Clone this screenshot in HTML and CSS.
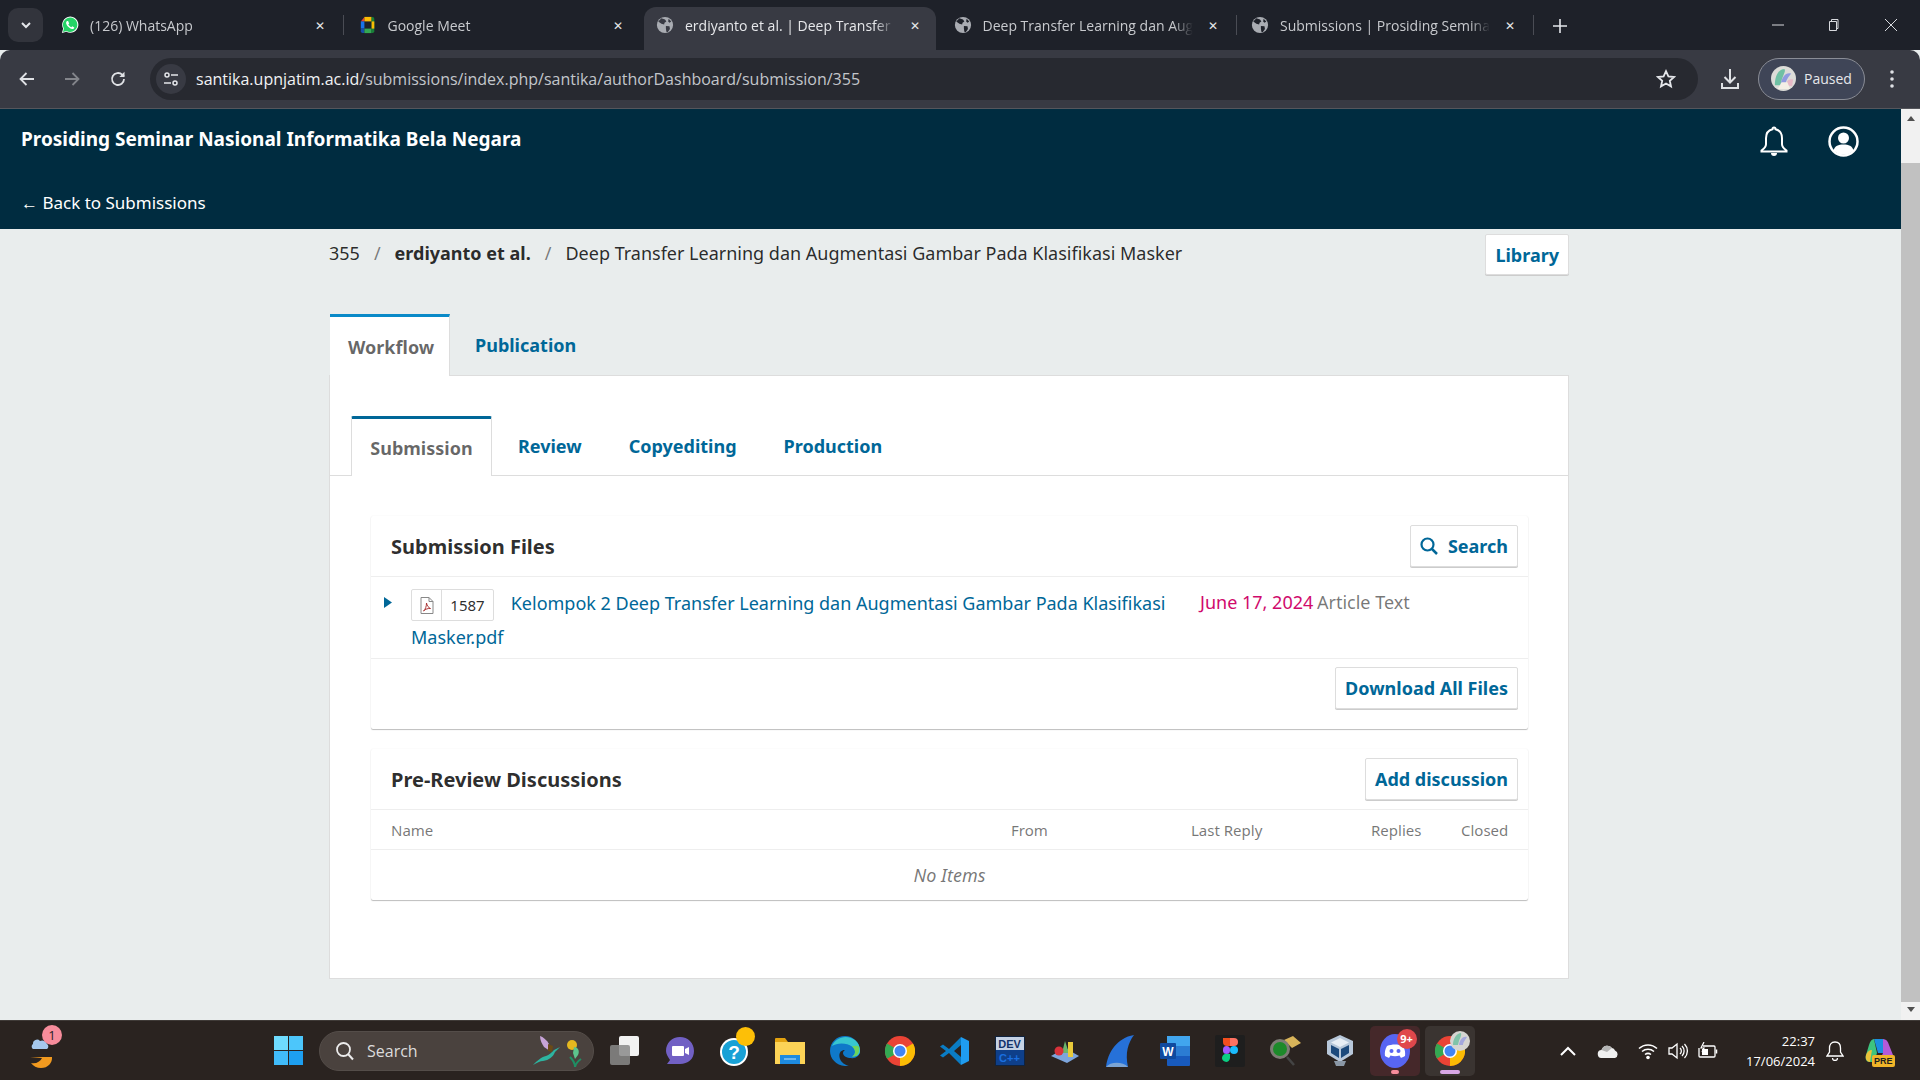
FILE: index.html
```html
<!DOCTYPE html>
<html lang="en">
  <head>
    <meta charset="UTF-8" />
    <title>erdiyanto et al. | Deep Transfer Learning</title>
    <link rel="stylesheet" href="styles.css">
  </head>
  <body>
    <div class="screen">
      <!-- browser tabs -->
      <div class="tabstrip">
        <div class="tab-search"><svg width="12" height="12" viewBox="0 0 12 12"><path d="M2 4l4 4 4-4" fill="none" stroke="#e4e6ea" stroke-width="2"/></svg></div>
        <div class="tab">
          <svg class="tab-icon" viewBox="0 0 20 20"><path d="M1 19l1.4-5A9 9 0 1 1 6 17.6z" fill="#fff"/><path d="M2.2 17.8l1.1-3.9A8 8 0 1 1 6.2 16.7z" fill="#25d366"/><path d="M7 5.5c-.8.3-1.5 1.300-1.300 2.600.3 2.400 3.700 6 6.700 6.400 1.300 0 2.200-.8 2.400-1.800l-2.300-1.300-1 1.100c-1.500-.5-2.800-1.800-3.400-3.300l1-1-1.200-2.700z" fill="#fff"/></svg>
          <span class="tab-title">(126) WhatsApp</span>
          <span class="tab-close">✕</span>
        </div>
        <div class="tab-sep"><i></i></div>
        <div class="tab">
          <svg class="tab-icon" viewBox="0 0 20 20"><path d="M2 6l4-5v5z" fill="#ea4335"/><path d="M6 1h8v5H6z" fill="#fbbc04"/><path d="M2 6h4v8H2z" fill="#1a73e8"/><path d="M2 14h4v5H4a2 2 0 0 1-2-2z" fill="#174ea6"/><path d="M6 14h8v5H6z" fill="#34a853"/><path d="M14 1h1a2 2 0 0 1 2 2v14a2 2 0 0 1-2 2h-1z" fill="#188038"/><path d="M14 6h3v8h-3z" fill="#fbbc04"/></svg>
          <span class="tab-title">Google Meet</span>
          <span class="tab-close">✕</span>
        </div>
        <div class="tab-sep"></div>
        <div class="tab active">
          <svg class="tab-icon" viewBox="0 0 20 20"><circle cx="10" cy="10" r="9" fill="#a9acb2"/><path d="M6 2.500l4 1.500 1.500 2-2 1.500-.5 2-3-1-3.500-2.500zM11 11l4 .5.500 3-2.500 3.500-1.500-.5-.5-3.500zM14 3l3 3-2 1.500-1.500-1.500z" fill="#383a43"/></svg>
          <span class="tab-title">erdiyanto et al. | Deep Transfer Learning dan</span>
          <span class="tab-close">✕</span>
        </div>
        <div class="tab-sep"></div>
        <div class="tab">
          <svg class="tab-icon" viewBox="0 0 20 20"><circle cx="10" cy="10" r="9" fill="#a9acb2"/><path d="M6 2.500l4 1.500 1.500 2-2 1.500-.5 2-3-1-3.500-2.500zM11 11l4 .5.500 3-2.500 3.500-1.500-.5-.5-3.500zM14 3l3 3-2 1.500-1.500-1.500z" fill="#1e2129"/></svg>
          <span class="tab-title">Deep Transfer Learning dan Augmentasi</span>
          <span class="tab-close">✕</span>
        </div>
        <div class="tab-sep"><i></i></div>
        <div class="tab">
          <svg class="tab-icon" viewBox="0 0 20 20"><circle cx="10" cy="10" r="9" fill="#a9acb2"/><path d="M6 2.500l4 1.500 1.500 2-2 1.500-.5 2-3-1-3.500-2.500zM11 11l4 .5.500 3-2.500 3.500-1.500-.5-.5-3.500zM14 3l3 3-2 1.500-1.500-1.500z" fill="#1e2129"/></svg>
          <span class="tab-title">Submissions | Prosiding Seminar Nasional</span>
          <span class="tab-close">✕</span>
        </div>
        <div class="tab-sep"><i></i></div>
        <div class="tab-new"><svg width="14" height="14" viewBox="0 0 14 14"><path d="M7 0v14M0 7h14" stroke="#e4e6ea" stroke-width="1.600"/></svg></div>
        <div class="window-controls">
          <svg class="win-min" width="12" height="12" viewBox="0 0 12 12"><path d="M0 6h12" stroke="#d8dade"/></svg>
          <svg class="win-max" width="14" height="14" viewBox="0 0 14 14"><path d="M3.500 3.500h7v9h-7zM5.500 3.500V1.500h6.500v9h-1.500" fill="none" stroke="#d8dade"/></svg>
          <svg class="win-close" width="14" height="14" viewBox="0 0 14 14"><path d="M1 1l12 12M13 1L1 13" stroke="#d8dade"/></svg>
        </div>
      </div>

      <!-- browser toolbar -->
      <div class="toolbar">
        <button class="nav-btn"><svg width="18" height="18" viewBox="0 0 18 18"><path d="M16 9H3M8.500 3L2.500 9l6 6" fill="none" stroke="#dfe1e5" stroke-width="1.800"/></svg></button>
        <button class="nav-btn"><svg width="18" height="18" viewBox="0 0 18 18"><path d="M2 9h13M9.500 3l6 6-6 6" fill="none" stroke="#83858b" stroke-width="1.800"/></svg></button>
        <button class="nav-btn"><svg width="18" height="18" viewBox="0 0 18 18"><path d="M15 9a6 6 0 1 1-1.800-4.300L15 6.500" fill="none" stroke="#dfe1e5" stroke-width="1.800"/><path d="M15.500 1.800v5.200h-5.200z" fill="#dfe1e5"/></svg></button>
        <div class="address-bar">
          <span class="site-info"><svg width="18" height="18" viewBox="0 0 18 18"><circle cx="5" cy="5" r="2" fill="none" stroke="#e4e6ea" stroke-width="1.500"/><path d="M9 5h7M2 13h7" stroke="#e4e6ea" stroke-width="1.500"/><circle cx="13" cy="13" r="2" fill="none" stroke="#e4e6ea" stroke-width="1.500"/></svg></span>
          <span class="url">santika.upnjatim.ac.id<span class="url-path">/submissions/index.php/santika/authorDashboard/submission/355</span></span>
          <svg class="star" width="20" height="20" viewBox="0 0 20 20"><path d="M10 2.200l2.400 5.200 5.600.6-4.200 3.800 1.200 5.600-5-2.900-5 2.900 1.200-5.600L2 8l5.600-.6z" fill="none" stroke="#e4e6ea" stroke-width="1.800"/></svg>
        </div>
        <svg class="download" width="20" height="22" viewBox="0 0 20 22"><path d="M10 1v13M4.500 9l5.500 5.500L15.500 9M2 15v5h16v-5" fill="none" stroke="#dfe1e5" stroke-width="2"/></svg>
        <div class="profile">
          <svg class="avatar" viewBox="0 0 26 26"><circle cx="13" cy="13" r="13" fill="#dcdcd8"/><path d="M4 20C4 10 8 3 14 3c2 3-3 8-4 17z" fill="#6fc0a4"/><path d="M10 20c1-9 6-14 11-12-2 2-6 7-6 12z" fill="#8f9be0"/><path d="M16 20c0-5 3-7 7-6l-1 7z" fill="#e6b9c7"/><path d="M7 24l4-7h6l3 7z" fill="#f4efe6"/></svg>
          <span>Paused</span>
        </div>
        <svg class="kebab" width="6" height="20" viewBox="0 0 6 20"><circle cx="3" cy="3" r="1.800" fill="#dfe1e5"/><circle cx="3" cy="10" r="1.800" fill="#dfe1e5"/><circle cx="3" cy="17" r="1.800" fill="#dfe1e5"/></svg>
      </div>

      <div class="viewport">
        <div class="page">
          <header class="app-header">
            <div class="header-top">
              <a class="journal-name">Prosiding Seminar Nasional Informatika Bela Negara</a>
              <div class="header-icons">
                <svg width="30" height="31" viewBox="0 0 30 31"><path d="M15 1.500c1 0 1.500.7 1.500 1.700 4.500 1 6.500 4.500 6.500 9v6c0 2.500 2 4.500 4.500 6.300v1H2.500v-1C5 22.700 7 20.700 7 18.200v-6c0-4.500 2-8 6.500-9 0-1 .5-1.700 1.500-1.700z" fill="none" stroke="#fff" stroke-width="2"/><path d="M12 27a3 3 0 0 0 6 0z" fill="#fff"/></svg>
                <svg width="31" height="31" viewBox="0 0 31 31"><circle cx="15.500" cy="15.500" r="14" fill="none" stroke="#fff" stroke-width="2.500"/><circle cx="15.500" cy="12" r="5.500" fill="#fff"/><path d="M5.500 24.500c1-4.500 5-6 10-6s9 1.500 10 6a14 14 0 0 1-20 0z" fill="#fff"/></svg>
              </div>
            </div>
            <a class="back-link">← Back to Submissions</a>
          </header>

          <main class="content">
            <div class="breadcrumb">
              <span>355</span>
              <span class="slash">/</span>
              <strong>erdiyanto et al.</strong>
              <span class="slash">/</span>
              <span>Deep Transfer Learning dan Augmentasi Gambar Pada Klasifikasi Masker</span>
              <a class="btn library-btn">Library</a>
            </div>

            <div class="main-tabs">
              <a class="main-tab current">Workflow</a>
              <a class="main-tab">Publication</a>
            </div>

            <section class="panel">
              <div class="sub-tabs">
                <a class="sub-tab current">Submission</a>
                <a class="sub-tab review">Review</a>
                <a class="sub-tab">Copyediting</a>
                <a class="sub-tab">Production</a>
              </div>

              <div class="panel-body">
                <div class="card">
                  <div class="card-head">
                    <h2>Submission Files</h2>
                    <a class="btn"><svg class="search-glyph" width="18" height="18" viewBox="0 0 18 18"><circle cx="7.500" cy="7.500" r="6" fill="none" stroke="#006798" stroke-width="2.200"/><path d="M12 12l5 5" stroke="#006798" stroke-width="2.500"/></svg>Search</a>
                  </div>
                  <div class="file-row">
                    <svg class="row-arrow" width="8" height="11" viewBox="0 0 8 11"><path d="M0 0l8 5.500L0 11z" fill="#006798"/></svg>
                    <div class="file-name">
                      <span class="file-badge">
                        <span class="file-type"><svg width="14" height="17" viewBox="0 0 14 17"><path d="M1 .5h8l4 4v12H1z" fill="none" stroke="#888"/><path d="M9 .5v4h4" fill="none" stroke="#888"/><path d="M3.500 14c2-1.500 3-5 3-8 .5 3 2 4.500 4 5.500-2.500-.2-5 .5-7 2.500z" fill="none" stroke="#a33"/></svg></span>
                        <span class="file-id">1587</span>
                      </span>
                      <a>Kelompok 2 Deep Transfer Learning dan Augmentasi Gambar Pada Klasifikasi Masker.pdf</a>
                    </div>
                    <div class="file-date">June 17, 2024</div>
                    <div class="file-genre">Article Text</div>
                  </div>
                  <div class="card-foot">
                    <a class="btn">Download All Files</a>
                  </div>
                </div>

                <div class="card">
                  <div class="card-head">
                    <h2>Pre-Review Discussions</h2>
                    <a class="btn">Add discussion</a>
                  </div>
                  <div class="table-head">
                    <span class="col-name">Name</span>
                    <span class="col-from">From</span>
                    <span class="col-reply">Last Reply</span>
                    <span class="col-replies">Replies</span>
                    <span class="col-closed">Closed</span>
                  </div>
                  <div class="no-items">No Items</div>
                </div>
              </div>
            </section>
          </main>
        </div>

        <div class="scrollbar">
          <span class="arrow-up"></span>
          <span class="thumb"></span>
          <span class="arrow-down"></span>
        </div>
      </div>

      <!-- windows taskbar -->
      <footer class="taskbar">
        <div class="weather">
          <svg width="30" height="36" viewBox="0 0 30 36"><path d="M7 11a4 4 0 0 1 7-3 5 5 0 0 1 7 3 3 3 0 0 1 0 5H7a3 3 0 0 1 0-5z" fill="#a6c8ec"/><path d="M4 24h22c.5 6-4 11-11 11-4 0-8-2-10-5 5 1 9-1 11-5z" fill="#f29a1f"/></svg>
          <span class="badge pink">1</span>
        </div>
        <div class="win-start">
          <svg width="29" height="29" viewBox="0 0 29 29"><rect width="14" height="14" fill="#6fdcff"/><rect x="15" width="14" height="14" fill="#4cc6fb"/><rect y="15" width="14" height="14" fill="#41bcfa"/><rect x="15" y="15" width="14" height="14" fill="#1d9ff0"/></svg>
        </div>
        <div class="task-search">
          <svg width="20" height="20" viewBox="0 0 20 20"><circle cx="8.500" cy="8.500" r="6.500" fill="none" stroke="#ececec" stroke-width="1.800"/><path d="M13 13l5 5.500" stroke="#ececec" stroke-width="2"/></svg>
          <span>Search</span>
          <svg class="bird" width="58" height="32" viewBox="0 0 58 32"><path d="M3 30c4-4 8-8 13-9 3-1 6-4 8-6l6-3-5 5c-2 5-6 8-12 9-3 0-6 2-10 4z" fill="#2db4a0"/><path d="M10 1c3 1 7 4 9 8l1 7-6-4c-2-3-4-7-4-11z" fill="#c7a4d8"/><path d="M18 9l5 2-1 6-4-1z" fill="#6b4a16"/><circle cx="42" cy="10" r="5" fill="#e5b81f"/><path d="M44 12c4 0 6 4 4 8l-3 4-2-6z" fill="#5cc48d"/><path d="M45 32c0-5-3-8-5-10M45 32c1-4 3-6 6-8" fill="none" stroke="#1f8e63" stroke-width="2"/></svg>
        </div>
        <div class="app-slot">
          <svg width="30" height="30" viewBox="0 0 30 30"><rect x="9" y="0" width="20" height="20" rx="2" fill="#f2f2f2"/><rect x="0" y="9" width="20" height="20" rx="2" fill="#8a8a8a" opacity=".85"/></svg>
        </div>
        <div class="app-slot">
          <svg width="30" height="30" viewBox="0 0 30 30"><path d="M15 1c8 0 14 6 14 14s-6 13-14 13H2l3-4C3 21 1 18 1 15 1 7 7 1 15 1z" fill="#7160c4"/><path d="M8 10h10a1 1 0 0 1 1 1v8a1 1 0 0 1-1 1H8a1 1 0 0 1-1-1v-8a1 1 0 0 1 1-1zM20 13l4-2v8l-4-2z" fill="#fff"/></svg>
        </div>
        <div class="app-slot">
          <svg width="32" height="32" viewBox="0 0 32 32"><circle cx="15" cy="17" r="14" fill="#fff"/><circle cx="15" cy="17" r="12" fill="#18a1d6"/><text x="15" y="24" text-anchor="middle" font-family="Liberation Sans" font-weight="700" font-size="19" fill="#fff">?</text></svg>
          <span class="badge yellow"></span>
        </div>
        <div class="app-slot">
          <svg width="30" height="30" viewBox="0 0 30 30"><path d="M0 3a1 1 0 0 1 1-1h9l3 4h-13z" fill="#e3a20f"/><path d="M0 6h30v22H0z" fill="#fcd356"/><path d="M5 19h20v9H5z" fill="#1e8be0"/><path d="M9 23h12" stroke="#bde3ff"/></svg>
        </div>
        <div class="app-slot">
          <svg width="30" height="30" viewBox="0 0 30 30"><path d="M15 0a15 15 0 0 1 15 15c0 5-5 8-9 7-4 0-8-2-8-5 0-2 2-3 2-3-6 0-7 6-4 11 3 4 8 5 8 5C8 31 0 24 0 15 0 6 7 0 15 0z" fill="#0f79c9"/><path d="M2 10C5 3 13-1 21 2c6 2 9 7 9 13 0 4-4 6-8 5.500 4-2 4-7 0-10-5-4-15-4-20-.5z" fill="#37c6d0"/><path d="M29 11c1 5-1 10-7 9.500 4-2 4-7 0-10 3-1 6-1 7 .5z" fill="#6ed35a"/></svg>
        </div>
        <div class="app-slot">
          <svg width="30" height="30" viewBox="0 0 30 30"><circle cx="15" cy="15" r="15" fill="#ea4335"/><path d="M15 15l-13 7.500A15 15 0 0 1 2 7.500z" fill="#34a853"/><path d="M15 15L28 7.500A15 15 0 0 1 15 30z" fill="#fbbc04"/><path d="M2 22.500L9 13h6l-6 6z" fill="#34a853"/><circle cx="15" cy="15" r="7" fill="#fff"/><circle cx="15" cy="15" r="5.500" fill="#4285f4"/></svg>
        </div>
        <div class="app-slot">
          <svg width="30" height="30" viewBox="0 0 30 30"><path d="M21 1l8 4v20l-8 4z" fill="#1f9cf0"/><path d="M21 1L9 13 3 8.500 0 10.500l6 4.500-6 4.500 3 2L9 17l12 12v-8l-7-6 7-6z" fill="#0a7cc4"/></svg>
        </div>
        <div class="app-slot">
          <div class="devcpp"><span>DEV</span><span class="cpp">C++</span></div>
        </div>
        <div class="app-slot">
          <svg width="30" height="30" viewBox="0 0 30 30"><path d="M1 20l14-8 14 8-12 7z" fill="#7da5dc"/><path d="M15 5l4 12h-7z" fill="#6bb56b"/><rect x="18" y="6" width="5" height="15" fill="#e8c93a"/><circle cx="9" cy="15" r="4.500" fill="#d8323a"/></svg>
        </div>
        <div class="app-slot">
          <svg width="30" height="34" viewBox="0 0 30 34"><path d="M29 1c-6 8-9 18-6 32H1C3 18 12 4 29 1z" fill="#2671d9"/><path d="M1 33c4-5 16-6 22 0z" fill="#7ba4d4"/></svg>
        </div>
        <div class="app-slot">
          <svg width="30" height="30" viewBox="0 0 30 30"><rect x="7" y="0" width="23" height="30" rx="1" fill="#185abd"/><rect x="7" y="0" width="23" height="10" fill="#41a5ee"/><rect x="7" y="10" width="23" height="10" fill="#2b7cd3"/><rect x="0" y="7" width="16" height="16" rx="1" fill="#104a9f"/><text x="8" y="20" text-anchor="middle" font-family="Liberation Sans" font-weight="700" font-size="12" fill="#fff">W</text></svg>
        </div>
        <div class="app-slot">
          <svg width="30" height="32" viewBox="0 0 30 32"><rect width="30" height="32" rx="2" fill="#1e1e1e"/><path d="M8 3h7v8H12a4 4 0 0 1-4-4z" fill="#f24e1e"/><path d="M15 3h4a4 4 0 0 1 0 8h-4z" fill="#ff7262"/><rect x="8" y="11" width="7" height="8" rx="3.500" fill="#a259ff"/><circle cx="19" cy="15" r="4" fill="#1abcfe"/><path d="M12 19h3v4a4 4 0 1 1-3-4z" fill="#0acf83"/></svg>
        </div>
        <div class="app-slot">
          <svg width="34" height="34" viewBox="0 0 34 34"><path d="M16 6l9-4 8 7-9 5z" fill="#d8b45a"/><circle cx="12" cy="15" r="10" fill="#7d7d75"/><circle cx="12" cy="15" r="7" fill="#1d8a2a"/><path d="M19 23l7 8" stroke="#444" stroke-width="2.500"/></svg>
        </div>
        <div class="app-slot">
          <svg width="28" height="34" viewBox="0 0 28 34"><path d="M14 1l13 6v13l-13 8L1 20V7z" fill="#b8c8da"/><path d="M14 4l9 4.500-9 4.500-9-4.500z" fill="#e8eef5"/><path d="M5 11l8 4v9l-8-5zM23 11l-8 4v9l8-5z" fill="#1d4a7c"/><path d="M8 27h12l-2 5h-8z" fill="#8a97a5"/></svg>
        </div>
        <div class="app-slot running discord">
          <svg width="30" height="36" viewBox="0 0 30 36"><ellipse cx="15" cy="18" rx="15" ry="17" fill="#5865f2"/><path d="M7 13c5-2 11-2 16 0 2 3 2.500 7 2 10-2 1-3 1.500-4 2l-1.500-2.500c-3 1-6 1-9 0L9 25c-1-.5-2-1-4-2-.5-3 0-7 2-10z" fill="#fff"/><circle cx="11.500" cy="18" r="2" fill="#5865f2"/><circle cx="18.500" cy="18" r="2" fill="#5865f2"/></svg>
          <span class="badge red">9+</span>
          <i class="run-dot"></i>
        </div>
        <div class="app-slot running chrome-open">
          <svg width="30" height="30" viewBox="0 0 30 30"><circle cx="15" cy="15" r="15" fill="#ea4335"/><path d="M15 15l-13 7.500A15 15 0 0 1 2 7.500z" fill="#34a853"/><path d="M15 15L28 7.500A15 15 0 0 1 15 30z" fill="#fbbc04"/><circle cx="15" cy="15" r="7" fill="#fff"/><circle cx="15" cy="15" r="5.500" fill="#4285f4"/></svg>
          <svg class="chrome-avatar" viewBox="0 0 20 20"><circle cx="10" cy="10" r="10" fill="#d5d5d2"/><path d="M3 14C3 7 7 2 11 2c1 3-2 6-3 12z" fill="#7fc4a9"/><path d="M9 14c1-6 4-9 8-8-1 2-4 5-4 8z" fill="#a3a8de"/></svg>
          <i class="run-dot wide"></i>
        </div>

        <div class="tray">
          <div class="tray-slot chevron"><svg width="16" height="10" viewBox="0 0 16 10"><path d="M1 9l7-7 7 7" fill="none" stroke="#fff" stroke-width="2"/></svg></div>
          <div class="tray-slot cloud"><svg width="22" height="14" viewBox="0 0 22 14"><path d="M5 14a4 4 0 0 1-.5-8A6 6 0 0 1 15 4a4 4 0 0 1 3 2.500A4 4 0 0 1 18 14z" fill="#f0f0f0"/><path d="M4.500 6A6 6 0 0 1 15 4l-5 4z" fill="#b5b5b5"/></svg></div>
          <div class="tray-slot"><svg width="20" height="18" viewBox="0 0 20 18"><path d="M1 6.500a13 13 0 0 1 18 0M4 9.500a9 9 0 0 1 12 0M7 12.500a5 5 0 0 1 6 0" fill="none" stroke="#fff" stroke-width="1.500"/><circle cx="10" cy="15.500" r="1.800" fill="#fff"/></svg></div>
          <div class="tray-slot"><svg width="20" height="18" viewBox="0 0 20 18"><path d="M1 6h3l5-4v14l-5-4H1z" fill="none" stroke="#fff" stroke-width="1.300"/><path d="M12 6a4 4 0 0 1 0 6M14 4a7 7 0 0 1 0 10M16.500 2a10 10 0 0 1 0 14" fill="none" stroke="#fff" stroke-width="1.300"/></svg></div>
          <div class="tray-slot"><svg width="20" height="18" viewBox="0 0 20 18"><path d="M5 4h11a1 1 0 0 1 1 1v9a1 1 0 0 1-1 1H2a1 1 0 0 1-1-1V6" fill="none" stroke="#fff" stroke-width="1.300"/><path d="M4 7h6v6H4z" fill="#fff"/><path d="M18.500 7.500v4" stroke="#fff" stroke-width="1.500"/><path d="M6 0L3 6h3L4 10" fill="none" stroke="#fff" stroke-width="1.200"/></svg></div>
          <div class="clock"><span>22:37</span><span>17/06/2024</span></div>
          <div class="tray-slot notif"><svg width="18" height="20" viewBox="0 0 18 20"><path d="M9 1c4 0 5.500 3 5.500 6v4l2.500 4H1l2.500-4V7C3.500 4 5 1 9 1z" fill="none" stroke="#fff" stroke-width="1.300"/><path d="M6.500 17a2.500 2.500 0 0 0 5 0" fill="none" stroke="#fff" stroke-width="1.300"/></svg></div>
          <div class="tray-slot copilot">
            <svg width="30" height="26" viewBox="0 0 30 26"><path d="M9 1h9l4 14h-9z" fill="#1b8fe0"/><path d="M4 7c1-4 3-6 5-6l3 14-3 9H5C1 24 0 21 1 17z" fill="#3dc47e"/><path d="M1 17c1-3 3-5 6-5l-2 12c-3 0-5-3-4-7z" fill="#e9c23a"/><path d="M18 1c3 0 5 2 6 6l4 10c1 4-1 7-5 7h-9l4-9z" fill="#b45ad8"/></svg>
            <span class="pre">PRE</span>
          </div>
        </div>
      </footer>
    </div>
  </body>
</html>
```

FILE: styles.css
```css
* {
  box-sizing: border-box;
}

html,
body {
  margin: 0;
  height: 100%;
  overflow: hidden;
}

body {
  font-family: "Noto Sans", sans-serif;
  color: rgba(0, 0, 0, 0.84);
}

a {
  text-decoration: none;
}

.screen {
  display: flex;
  flex-direction: column;
  height: 1080px;
  background: #e9eded;
}

/* browser tabs */
.tabstrip {
  display: flex;
  align-items: flex-end;
  height: 50px;
  padding-left: 8px;
  background: #1e2129;
  font-family: "Open Sans", sans-serif;
  font-size: 14px;
  color: #c8cace;
}

.tab-search {
  display: flex;
  align-items: center;
  justify-content: center;
  align-self: flex-start;
  width: 35px;
  height: 34px;
  margin-top: 8px;
  margin-right: 6px;
  border-radius: 10px;
  background: #32343c;
}

.tab {
  display: flex;
  align-items: center;
  width: 292px;
  height: 43px;
  padding: 0 12px 7px;
  border-radius: 12px 12px 0 0;
}

.tab.active {
  background: #383a43;
  color: #e6e7ea;
}

.tab-icon {
  flex: none;
  width: 18px;
  height: 18px;
  margin-right: 11px;
}

.tab-title {
  flex: 1;
  overflow: hidden;
  white-space: nowrap;
  -webkit-mask-image: linear-gradient(90deg, #000 190px, transparent 210px);
  mask-image: linear-gradient(90deg, #000 190px, transparent 210px);
}

.tab-close {
  flex: none;
  width: 14px;
  margin-right: 2px;
  font-size: 12px;
  text-align: center;
  color: #e6e7ea;
}

.tab-sep {
  display: flex;
  align-items: center;
  justify-content: center;
  align-self: flex-end;
  flex: none;
  width: 5.5px;
  height: 43px;
  padding-bottom: 7px;
}

.tab-sep i {
  width: 1px;
  height: 20px;
  background: #4a4c54;
}

.tab-new {
  display: flex;
  margin-left: 16px;
  padding-bottom: 17px;
}

.window-controls {
  display: flex;
  align-items: center;
  align-self: flex-start;
  height: 50px;
  margin-left: auto;
  padding-right: 22px;
}

.win-max {
  margin-left: 42px;
}

.win-close {
  margin-left: 44px;
}

/* browser toolbar */
.toolbar {
  display: flex;
  align-items: center;
  height: 59px;
  padding: 0 0 1px 4px;
  border-bottom: 1px solid #55565c;
  border-radius: 10px 10px 0 0;
  background: #383a43;
}

.nav-btn {
  display: flex;
  align-items: center;
  justify-content: center;
  width: 45.5px;
  height: 40px;
  padding: 0;
  border: 0;
  background: none;
}

.address-bar {
  display: flex;
  align-items: center;
  width: 1548px;
  height: 42px;
  margin-left: 9.5px;
  padding: 0 22px 0 6px;
  border-radius: 21px;
  background: #272930;
}

.site-info {
  display: flex;
  align-items: center;
  justify-content: center;
  width: 30px;
  height: 30px;
  margin-right: 10px;
  border-radius: 50%;
  background: #383a43;
}

.url {
  flex: 1;
  font-family: "Open Sans", sans-serif;
  font-size: 16px;
  color: #f1f2f4;
}

.url-path {
  color: #c3c6cb;
}

.download {
  margin-left: 22px;
}

.profile {
  display: flex;
  align-items: center;
  width: 107px;
  height: 42px;
  margin-left: 18px;
  padding-left: 12px;
  border: 1px solid #8a8d96;
  border-radius: 21px;
  background: #3f4557;
  font-family: "Open Sans", sans-serif;
  font-size: 14px;
  color: #e6e7ea;
}

.avatar {
  width: 25px;
  height: 25px;
  margin-right: 8px;
}

.kebab {
  margin-left: 24px;
}

/* page area */
.viewport {
  display: flex;
  flex: 1;
  min-height: 0;
}

.page {
  flex: 1;
  min-width: 0;
  overflow: hidden;
}

.app-header {
  height: 120px;
  padding: 17px 21px 0;
  background: #002c40;
  color: #fff;
}

.header-top {
  display: flex;
  justify-content: space-between;
  height: 64px;
}

.journal-name {
  font-size: 19px;
  font-weight: 700;
  line-height: 26px;
}

.header-icons {
  display: flex;
  gap: 39px;
  padding-right: 21px;
}

.back-link {
  font-size: 17px;
  line-height: 26px;
}

.content {
  width: 1240px;
  margin-left: 329px;
}

.breadcrumb {
  display: flex;
  align-items: center;
  height: 48px;
  font-size: 18px;
  color: rgba(0, 0, 0, 0.84);
}

.breadcrumb strong {
  font-weight: 700;
}

.slash {
  margin: 0 14px;
  color: rgba(0, 0, 0, 0.5);
}

.btn {
  display: inline-flex;
  align-items: center;
  height: 42px;
  padding: 0 9px;
  border: 1px solid #ddd;
  border-radius: 2px;
  background: #fff;
  box-shadow: 0 1px 0 #ccc;
  font-size: 18px;
  font-weight: 700;
  color: #006798;
}

.library-btn {
  height: 41px;
  margin-top: 3px;
  margin-left: auto;
}

.search-glyph {
  margin-right: 10px;
}

.main-tabs {
  display: flex;
  align-items: stretch;
  height: 62px;
  margin-top: 37px;
  margin-left: 1px;
  margin-bottom: -1px;
  font-size: 18px;
  font-weight: 700;
}

.main-tab {
  display: flex;
  align-items: center;
  position: relative;
  padding: 0 25px;
  color: #006798;
}

.main-tab.current {
  width: 120px;
  padding: 0 18px;
  border-top: 3px solid #0a8ac8;
  border-right: 1px solid #ddd;
  background: #fff;
  color: rgba(0, 0, 0, 0.6);
}

.panel {
  height: 604px;
  border: 1px solid #ddd;
  background: #fff;
}

.sub-tabs {
  display: flex;
  align-items: stretch;
  height: 100px;
  padding-top: 40px;
  padding-left: 21px;
  border-bottom: 1px solid #ddd;
  font-size: 18px;
  font-weight: 700;
}

.sub-tab {
  display: flex;
  align-items: center;
  margin-right: 47px;
  color: #006798;
}

.sub-tab.current {
  width: 141px;
  height: 60px;
  margin-right: 26px;
  justify-content: center;
  border: 1px solid #ddd;
  border-top: 3px solid #006798;
  border-bottom: 0;
  border-radius: 2px 2px 0 0;
  background: #fff;
  color: rgba(0, 0, 0, 0.6);
}

.panel-body {
  display: flex;
  flex-direction: column;
  gap: 20px;
  padding: 40px 40px 0 41px;
}

.card {
  border-radius: 2px;
  background: #fff;
  box-shadow: 0 1px 1px rgba(0, 0, 0, 0.25), 0 0 2px rgba(0, 0, 0, 0.06);
}

.card-head {
  display: flex;
  align-items: center;
  justify-content: space-between;
  height: 60px;
  padding: 0 10px 0 20px;
}

.card-head h2 {
  margin: 0;
  font-size: 20px;
  font-weight: 700;
}

.file-row {
  display: flex;
  position: relative;
  height: 83px;
  padding: 10px 0 0 40px;
  border-top: 1px solid #eee;
  border-bottom: 1px solid #eee;
  font-size: 18px;
}

.row-arrow {
  position: absolute;
  left: 13px;
  top: 20px;
}

.file-name {
  width: 789px;
  line-height: 32px;
}

.file-name a {
  color: #006798;
}

.file-badge {
  display: inline-flex;
  align-items: stretch;
  height: 32px;
  margin-right: 12px;
  border: 1px solid #ddd;
  border-radius: 2px;
  vertical-align: middle;
  font-size: 15px;
  line-height: 30px;
}

.file-type {
  display: flex;
  align-items: center;
  justify-content: center;
  width: 30px;
  border-right: 1px solid #ddd;
}

.file-id {
  width: 51px;
  text-align: center;
}

.file-date {
  width: 117px;
  line-height: 30px;
  color: #d00a6c;
}

.file-genre {
  line-height: 30px;
  color: rgba(0, 0, 0, 0.54);
}

.card-foot {
  display: flex;
  justify-content: flex-end;
  height: 70px;
  padding: 8px 10px 0;
}

.table-head {
  display: flex;
  align-items: center;
  position: relative;
  height: 41px;
  border-top: 1px solid #eee;
  border-bottom: 1px solid #eee;
  font-size: 15px;
  color: rgba(0, 0, 0, 0.54);
}

.table-head span {
  flex: none;
}

.col-name {
  width: 640px;
  padding-left: 20px;
}

.col-from {
  width: 180px;
}

.col-reply {
  width: 180px;
}

.col-replies {
  width: 90px;
}

.no-items {
  height: 50px;
  font-size: 18px;
  font-style: italic;
  line-height: 50px;
  text-align: center;
  color: rgba(0, 0, 0, 0.54);
}

.scrollbar {
  display: flex;
  flex-direction: column;
  align-items: center;
  flex: none;
  width: 19px;
  background: #f1f1f1;
}

.arrow-up,
.arrow-down {
  flex: none;
  width: 0;
  height: 0;
  border-left: 4px solid transparent;
  border-right: 4px solid transparent;
}

.arrow-up {
  margin-top: 7px;
  border-bottom: 5px solid #505050;
}

.arrow-down {
  margin-top: 5px;
  border-top: 5px solid #505050;
}

.thumb {
  flex: none;
  width: 100%;
  height: 839px;
  margin-top: 42px;
  background: #c1c1c1;
}

/* windows taskbar */
.taskbar {
  display: flex;
  align-items: center;
  flex: none;
  height: 60px;
  padding-left: 21px;
  border-top: 1px solid #3f3a37;
  background: #2a2320;
}

.weather {
  position: relative;
  display: flex;
  justify-content: center;
  width: 40px;
}

.badge {
  position: absolute;
  display: flex;
  align-items: center;
  justify-content: center;
  border-radius: 50%;
  font-family: "Open Sans", sans-serif;
  font-size: 13px;
  color: #1e1e1e;
}

.badge.pink {
  left: 21px;
  top: -8px;
  width: 20px;
  height: 20px;
  background: #f78c9b;
}

.badge.yellow {
  left: 29px;
  top: 1px;
  width: 19px;
  height: 19px;
  background: #fdbf07;
}

.badge.red {
  left: 27px;
  top: 3px;
  width: 20px;
  height: 20px;
  background: #e0474c;
  font-size: 11px;
  font-weight: 700;
  color: #fff;
}

.win-start {
  display: flex;
  justify-content: center;
  width: 55px;
  margin-left: 200px;
}

.task-search {
  display: flex;
  align-items: center;
  position: relative;
  width: 275px;
  height: 40px;
  margin-left: 3px;
  padding-left: 15px;
  border: 1px solid #544d49;
  border-radius: 20px;
  background: #4a423e;
  font-family: "Open Sans", sans-serif;
  font-size: 16px;
  color: #dcdcdc;
}

.task-search span {
  margin-left: 12px;
}

.bird {
  margin-left: auto;
  margin-right: 5px;
}

.app-slot {
  position: relative;
  display: flex;
  align-items: center;
  justify-content: center;
  flex: none;
  width: 55px;
  height: 50px;
}

.task-search + .app-slot {
  margin-left: 3px;
}

.app-slot.running {
  width: 50px;
  margin: 0 2.5px;
  border-radius: 5px;
}

.discord {
  background: #45282a;
}

.chrome-open {
  background: #3a3431;
}

.chrome-avatar {
  position: absolute;
  left: 25px;
  top: 5px;
  width: 20px;
  height: 20px;
}

.run-dot {
  position: absolute;
  bottom: 2px;
  left: 50%;
  width: 8px;
  height: 4px;
  margin-left: -4px;
  border-radius: 2px;
  background: #f78c9b;
}

.run-dot.wide {
  width: 20px;
  margin-left: -10px;
  background: #d8a6e6;
}

.devcpp {
  display: flex;
  flex-direction: column;
  align-items: center;
  width: 30px;
  height: 30px;
  border: 1px solid #10233f;
  background: linear-gradient(#c5d2e5 48%, #0e3f8a 48%);
  font-family: "Liberation Sans", sans-serif;
  font-size: 11px;
  font-weight: 700;
  line-height: 14px;
  color: #12336b;
}

.devcpp .cpp {
  color: #1a6fe0;
}

.tray {
  display: flex;
  align-items: center;
  margin-left: auto;
  padding-right: 15px;
  color: #fff;
}

.tray-slot {
  display: flex;
  align-items: center;
  justify-content: center;
  position: relative;
  width: 30px;
}

.cloud,
.copilot {
  width: 50px;
}

.notif {
  width: 40px;
}

.clock {
  display: flex;
  flex-direction: column;
  align-items: flex-end;
  width: 92px;
  font-family: "Open Sans", sans-serif;
  font-size: 13px;
  line-height: 20px;
}

.pre {
  position: absolute;
  left: 17px;
  top: 17px;
  height: 12px;
  padding: 0 2px;
  border-radius: 2px;
  background: #f0b429;
  font-family: "Liberation Sans", sans-serif;
  font-size: 9px;
  font-weight: 700;
  line-height: 12px;
  color: #1e1e1e;
}
```
